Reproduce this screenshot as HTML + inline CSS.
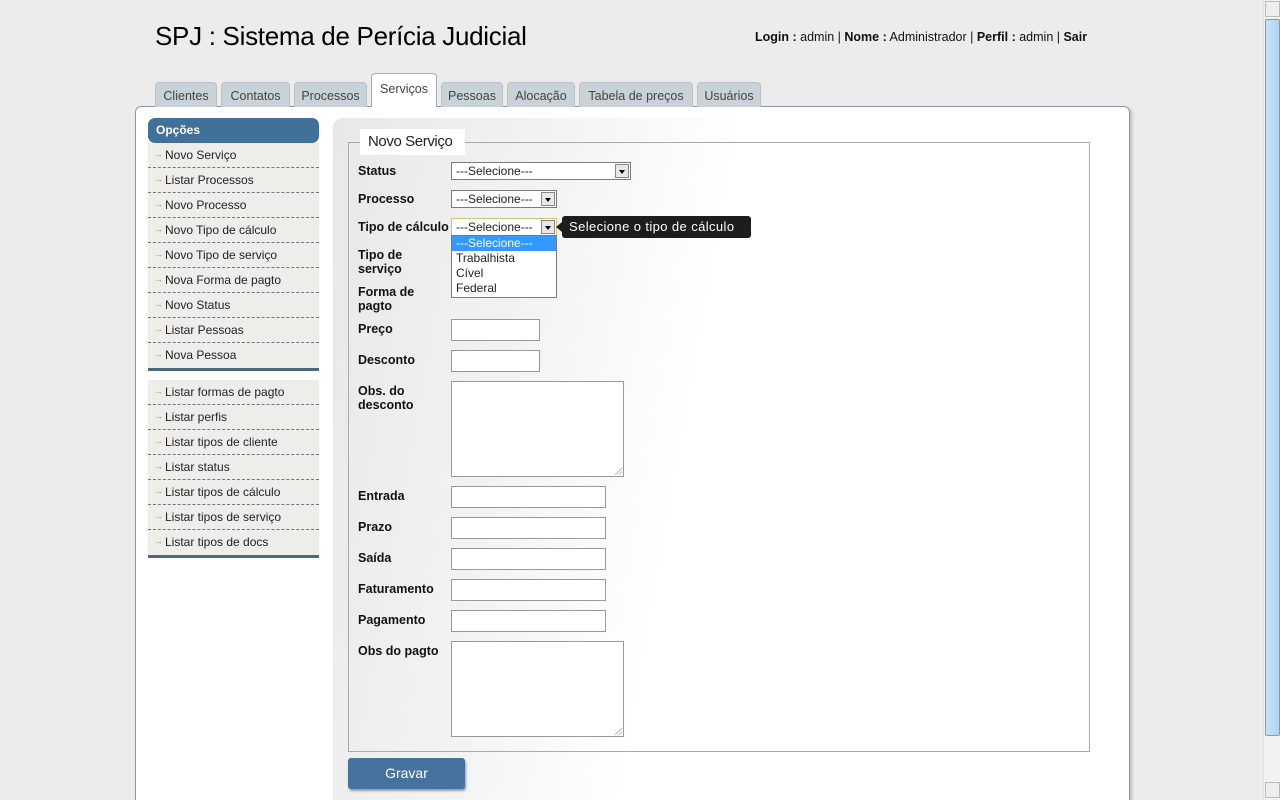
<!DOCTYPE html>
<html style="overflow:hidden;height:800px"><head><meta charset="utf-8">
<style>
*{box-sizing:border-box;margin:0;padding:0}
body{width:1280px;height:800px;overflow:hidden;background:#ececec;font-family:"Liberation Sans","DejaVu Sans",sans-serif;font-size:12px;color:#111;position:relative}
.a{position:absolute}
.title{left:155px;top:21px;font-size:26px;color:#000;letter-spacing:-0.3px}
.login{left:755px;top:30px;font-size:12.5px}
.tab{position:absolute;top:82px;height:25px;background:#c9d1d9;border:1px solid #b8c0c8;border-bottom:none;border-radius:4px 4px 0 0;color:#444;font-size:12.5px;text-align:center;line-height:26px}
.tab.on{top:73px;height:34px;background:#fff;border-color:#aab;line-height:30px}
.main{left:135px;top:106px;width:995px;height:700px;background:#fff;border:1px solid #8a96a4;border-radius:6px;box-shadow:2px 2px 3px #bbb}
.content{left:333px;top:118px;width:790px;height:682px;border-radius:10px 10px 0 0;background:linear-gradient(100deg,#e8e8e8 0%,#f3f3f3 25%,#fff 45%,#fff 100%)}
.menu{left:148px;width:171px}
.mh{left:148px;top:118px;width:171px;height:25px;background:#41709a;border-radius:7px;color:#fff;font-weight:bold;padding:5px 8px;font-size:12px}
.mi{height:25px;background:#ededea;border-bottom:1px dashed #777;padding:5px 0 0 6px;font-size:12px;color:#222}
.mi:before{content:"\2192";color:#d08a3a;font-size:9px;margin-right:2px;vertical-align:2px}
.mi.last{border-bottom:none}
.sep{height:3px;background:#4e6783}
fieldset{position:absolute;left:348px;top:142px;width:742px;height:610px;border:1px solid #aaa;background:transparent}
.leg{left:360px;top:129px;background:#fff;padding:4px 8px;font-size:15px;color:#222;width:105px;height:26px;white-space:nowrap;overflow:hidden;letter-spacing:-0.4px}
.lb{position:absolute;left:358px;font-weight:bold;font-size:12.5px;line-height:14px}
.in{position:absolute;left:451px;height:22px;border:1px solid #999;background:#fff}
.sel{position:absolute;left:451px;height:18px;border:1px solid #7a7a7a;background:#fff;font-size:12px;padding:1px 4px;color:#222}
.sel i{position:absolute;right:1px;top:1px;width:14px;height:14px;border:1px solid #888;background:#e8e8e8}
.sel i:after{content:"";position:absolute;left:3px;top:5px;border:3px solid transparent;border-top:4px solid #000}
.ta{position:absolute;left:451px;width:173px;height:96px;border:1px solid #999;background:#fff}
.ta:after{content:"";position:absolute;right:1px;bottom:1px;width:7px;height:7px;background:linear-gradient(135deg,transparent 45%,#888 50%,transparent 55%,transparent 70%,#888 75%,transparent 80%)}
.dd{left:451px;top:235px;width:106px;height:63px;background:#fff;border:1px solid #7a7a7a;font-size:12px}
.dd div{height:15px;padding-left:4px;line-height:15px;color:#222}
.tip{left:562px;top:216px;width:189px;height:22px;background:#1d1d1d;color:#fff;border-radius:3px;font-size:13px;padding:3px 7px;letter-spacing:0.4px}
.tip:before{content:"";position:absolute;left:-6px;top:6px;border:5px solid transparent;border-right:6px solid #1d1d1d;border-left:none}
.btn{left:348px;top:758px;width:117px;height:31px;background:#4672a0;border-radius:3px;color:#fff;font-size:14px;text-align:center;line-height:31px;box-shadow:1px 2px 2px #999}
.sb{left:1263px;top:0;width:17px;height:800px;background:#f2f2f0;border-left:1px solid #e0e0e0}
.clip{position:absolute;left:0;top:0;width:1280px;height:800px;overflow:hidden}
</style></head><body><div class="clip">
<div class="a title">SPJ : Sistema de Perícia Judicial</div>
<div class="a login"><b>Login :</b> admin | <b>Nome :</b> Administrador | <b>Perfil :</b> admin | <b>Sair</b></div>
<div class="a main"></div>
<div class="tab" style="left:155px;width:62px">Clientes</div>
<div class="tab" style="left:221px;width:69px">Contatos</div>
<div class="tab" style="left:294px;width:73px">Processos</div>
<div class="tab on" style="left:371px;width:66px">Serviços</div>
<div class="tab" style="left:441px;width:62px">Pessoas</div>
<div class="tab" style="left:507px;width:68px">Alocação</div>
<div class="tab" style="left:579px;width:114px">Tabela de preços</div>
<div class="tab" style="left:697px;width:64px">Usuários</div>
<div class="a content"></div>
<div class="a mh">Opções</div>
<div class="a menu" style="top:143px">
<div class="mi">Novo Serviço</div><div class="mi">Listar Processos</div><div class="mi">Novo Processo</div><div class="mi">Novo Tipo de cálculo</div><div class="mi">Novo Tipo de serviço</div><div class="mi">Nova Forma de pagto</div><div class="mi">Novo Status</div><div class="mi">Listar Pessoas</div><div class="mi last">Nova Pessoa</div><div class="sep"></div>
</div>
<div class="a menu" style="top:380px">
<div class="mi">Listar formas de pagto</div><div class="mi">Listar perfis</div><div class="mi">Listar tipos de cliente</div><div class="mi">Listar status</div><div class="mi">Listar tipos de cálculo</div><div class="mi">Listar tipos de serviço</div><div class="mi last">Listar tipos de docs</div><div class="sep"></div>
</div>
<fieldset></fieldset>
<div class="a leg">Novo Serviço</div>
<div class="lb" style="top:164px">Status</div>
<div class="sel" style="top:162px;width:180px">---Selecione---<i></i></div>
<div class="lb" style="top:192px">Processo</div>
<div class="sel" style="top:190px;width:106px">---Selecione---<i></i></div>
<div class="lb" style="top:220px">Tipo de cálculo</div>
<div class="sel" style="top:218px;width:106px;border-color:#d8c070">---Selecione---<i></i></div>
<div class="lb" style="top:248px">Tipo de<br>serviço</div>
<div class="lb" style="top:285px">Forma de<br>pagto</div>
<div class="lb" style="top:322px">Preço</div><div class="in" style="top:319px;width:89px"></div>
<div class="lb" style="top:353px">Desconto</div><div class="in" style="top:350px;width:89px"></div>
<div class="lb" style="top:384px">Obs. do<br>desconto</div><div class="ta" style="top:381px"></div>
<div class="lb" style="top:489px">Entrada</div><div class="in" style="top:486px;width:155px"></div>
<div class="lb" style="top:520px">Prazo</div><div class="in" style="top:517px;width:155px"></div>
<div class="lb" style="top:551px">Saída</div><div class="in" style="top:548px;width:155px"></div>
<div class="lb" style="top:582px">Faturamento</div><div class="in" style="top:579px;width:155px"></div>
<div class="lb" style="top:613px">Pagamento</div><div class="in" style="top:610px;width:155px"></div>
<div class="lb" style="top:644px">Obs do pagto</div><div class="ta" style="top:641px"></div>
<div class="a dd"><div style="background:#3399ff;color:#fff">---Selecione---</div><div>Trabalhista</div><div>Cível</div><div>Federal</div></div>
<div class="a tip">Selecione o tipo de cálculo</div>
<div class="a btn">Gravar</div>
<div class="a sb">
<div class="a" style="left:1px;top:1px;width:15px;height:16px;border:1px solid #bbb;background:#eee"></div>
<div class="a" style="left:1px;top:19px;width:15px;height:717px;border:1px solid #7d9bc0;border-radius:2px;background:linear-gradient(90deg,#c6e2f6,#b0d4ef)"></div>
<div class="a" style="left:1px;top:782px;width:15px;height:16px;border:1px solid #bbb;background:#eee"></div>
</div>
</div></body></html>
